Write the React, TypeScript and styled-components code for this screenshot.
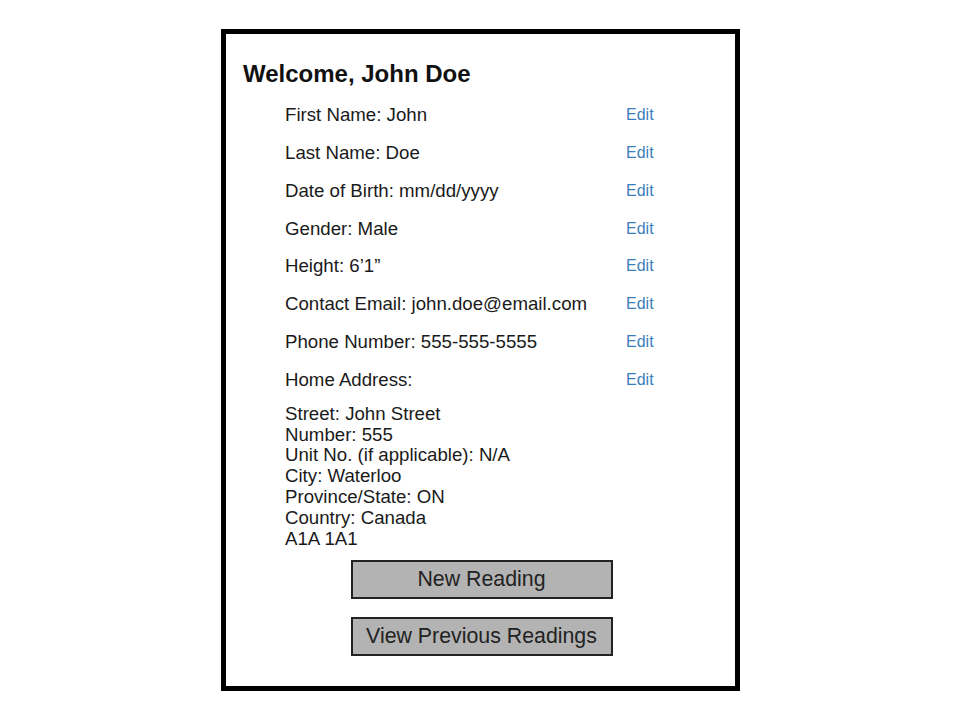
import React from "react";
import styled, { createGlobalStyle } from "styled-components";

const GlobalStyle = createGlobalStyle`
  body {
    margin: 0;
    background: #ffffff;
    font-family: "Liberation Sans", Arial, sans-serif;
    color: #1a1a1a;
  }
`;

interface Field {
  label: string;
  value: string;
}

const fields: Field[] = [
  { label: "First Name", value: "John" },
  { label: "Last Name", value: "Doe" },
  { label: "Date of Birth", value: "mm/dd/yyyy" },
  { label: "Gender", value: "Male" },
  { label: "Height", value: "6\u20191\u201D" },
  { label: "Contact Email", value: "john.doe@email.com" },
  { label: "Phone Number", value: "555-555-5555" },
  { label: "Home Address", value: "" },
];

const addressLines = [
  "Street: John Street",
  "Number: 555",
  "Unit No. (if applicable): N/A",
  "City: Waterloo",
  "Province/State: ON",
  "Country: Canada",
  "A1A 1A1",
];

const App: React.FC = () => {
  return (
    <>
      <GlobalStyle />
      <Page>
        <Frame>
          <Title>Welcome, John Doe</Title>
          <FieldList>
            {fields.map((f) => (
              <FieldRow key={f.label}>
                <FieldText>
                  {f.label}:{f.value ? ` ${f.value}` : ""}
                </FieldText>
                <EditLink href="#">Edit</EditLink>
              </FieldRow>
            ))}
          </FieldList>
          <Address>
            {addressLines.map((line) => (
              <div key={line}>{line}</div>
            ))}
          </Address>
          <Actions>
            <ActionButton>New Reading</ActionButton>
            <ActionButton>View Previous Readings</ActionButton>
          </Actions>
        </Frame>
      </Page>
    </>
  );
};

export default App;

const Page = styled.div`
  display: flex;
  padding: 29px 0 0 221px;
`;

const Frame = styled.div`
  box-sizing: border-box;
  width: 519px;
  height: 662px;
  border: 5px solid #000;
  padding: 26px 17px 0 17px;
  display: flex;
  flex-direction: column;
`;

const Title = styled.h1`
  margin: 0;
  font-size: 24px;
  font-weight: bold;
  line-height: 28px;
  color: #111;
`;

const FieldList = styled.div`
  display: flex;
  flex-direction: column;
  margin-top: 8px;
  padding-left: 42px;
`;

const FieldRow = styled.div`
  display: grid;
  grid-template-columns: 341px auto;
  align-items: center;
  height: 37.86px;
`;

const FieldText = styled.span`
  font-size: 18.67px;
  color: #1a1a1a;
`;

const EditLink = styled.a`
  font-size: 16px;
  color: #3a7fbd;
  text-decoration: none;
`;

const Address = styled.div`
  margin-top: 5px;
  padding-left: 42px;
  font-size: 18.67px;
  line-height: 20.8px;
  color: #1a1a1a;
`;

const Actions = styled.div`
  display: flex;
  flex-direction: column;
  align-items: center;
  gap: 18px;
  margin-top: 11px;
  padding-left: 2px;
`;

const ActionButton = styled.button`
  box-sizing: border-box;
  width: 262px;
  height: 39px;
  background: #b3b3b3;
  border: 2px solid #222;
  border-radius: 0;
  font-family: "Liberation Sans", Arial, sans-serif;
  font-size: 21.33px;
  color: #222;
  padding: 0;
  cursor: pointer;
`;
